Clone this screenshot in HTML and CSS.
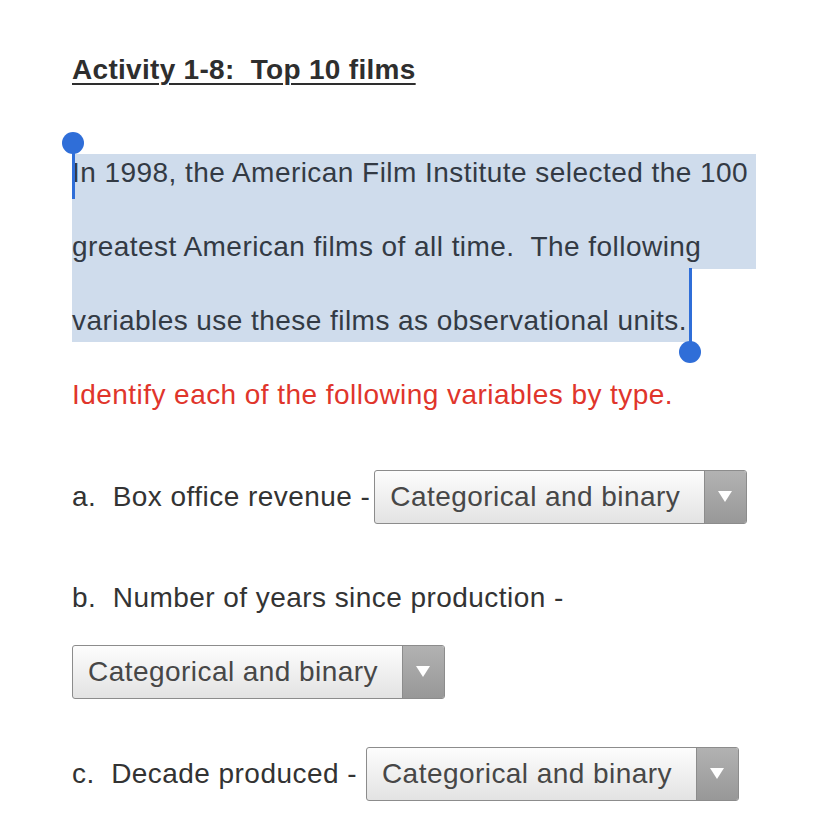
FILE: index.html
```html
<!DOCTYPE html>
<html>
<head>
<meta charset="utf-8">
<link rel="stylesheet" href="styles.css">
</head>
<body>
<main class="page">
  <h1 class="title">Activity 1-8:&nbsp; Top 10 films</h1>
  <div class="intro">
    <div class="sel sel-a"></div>
    <div class="sel sel-b"></div>
    <div class="handle handle-start"><span class="knob"></span><span class="bar"></span></div>
    <div class="handle handle-end"><span class="bar"></span><span class="knob"></span></div>
    <p class="para">In 1998, the American Film Institute selected the 100 greatest American films of all time.&nbsp; The following variables use these films as observational units.</p>
    <p class="para red">Identify each of the following variables by type.</p>
  </div>
  <div class="row row-a">
    <span class="label">a.&nbsp; Box office revenue -</span>
    <div class="select"><span class="val">Categorical and binary</span><span class="arrow"></span></div>
  </div>
  <div class="label-line">b.&nbsp; Number of years since production -</div>
  <div class="row row-b">
    <div class="select"><span class="val">Categorical and binary</span><span class="arrow"></span></div>
  </div>
  <div class="row row-c">
    <span class="label">c.&nbsp; Decade produced -</span>
    <div class="select"><span class="val">Categorical and binary</span><span class="arrow"></span></div>
  </div>
</main>
</body>
</html>
```
FILE: styles.css
```css
html, body { margin: 0; padding: 0; background: #fff; }
body { font-family: "Liberation Sans", Arial, sans-serif; color: #333; letter-spacing: 0.45px; }
.page { padding: 50px 0 0 72px; width: 690px; }
.title {
  margin: 0;
  font-size: 28px;
  font-weight: bold;
  letter-spacing: 0.3px;
  line-height: 40px;
  text-decoration: underline;
  text-decoration-thickness: 2px;
  text-underline-offset: 4px;
  color: #2e2e2e;
}
.intro { position: relative; margin-top: 46px; }
.para {
  position: relative;
  margin: 0;
  font-size: 28px;
  line-height: 74px;
  color: #333a44;
}
.para.red { color: #e0352b; }
.sel { position: absolute; background: #cfdcec; }
.sel-a { left: 0; top: 18px; width: 684px; height: 115px; }
.sel-b { left: 0; top: 133px; width: 618px; height: 73px; }
.handle { position: absolute; display: flex; flex-direction: column; align-items: center; z-index: 2; }
.handle .knob { width: 22px; height: 22px; border-radius: 50%; background: #2f6ed8; flex: none; }
.handle .bar { width: 3px; background: #2f6ed8; flex: none; }
.handle-start { left: -10px; top: -4px; }
.handle-start .knob { margin-bottom: -6px; }
.handle-start .bar { height: 51px; }
.handle-end { left: 607px; top: 132px; }
.handle-end .bar { height: 82px; }
.handle-end .knob { margin-top: -9px; }

.row { display: flex; align-items: center; }
.label { font-size: 28px; color: #333; white-space: pre; }
.row-a { margin-top: 38px; }
.row-a .label { margin-right: 4px; }
.label-line { font-size: 28px; line-height: 74px; margin-top: 37px; color: #333; }
.row-b { margin-top: 10px; }
.row-c { margin-top: 48px; }
.row-c .label { margin-right: 9px; }

.select {
  display: flex;
  align-items: stretch;
  height: 52px;
  border: 1px solid #8c8c8c;
  border-radius: 3px;
  background: linear-gradient(#fdfdfd, #e3e3e3);
  box-sizing: content-box;
  overflow: hidden;
}
.val {
  display: flex;
  align-items: center;
  padding: 0 24px 0 15px;
  font-size: 28px;
  color: #474747;
  white-space: nowrap;
}
.arrow {
  width: 41px;
  border-left: 1px solid #8c8c8c;
  background: linear-gradient(#b2b2b2, #989898);
  position: relative;
}
.arrow::after {
  content: "";
  position: absolute;
  left: 13px;
  top: 20px;
  border-left: 7px solid transparent;
  border-right: 7px solid transparent;
  border-top: 11px solid #fff;
}
```
